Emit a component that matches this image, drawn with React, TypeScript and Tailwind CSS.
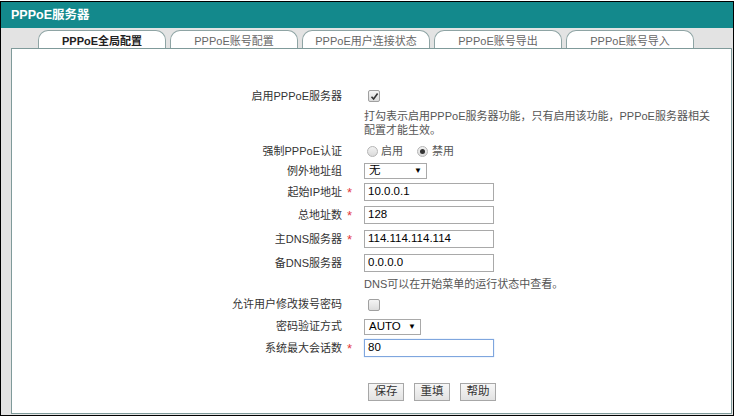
import type { ReactNode } from "react"

const tabs = ["PPPoE全局配置", "PPPoE账号配置", "PPPoE用户连接状态", "PPPoE账号导出", "PPPoE账号导入"]

const Row = ({
  label,
  required,
  h,
  children,
}: {
  label?: string
  required?: boolean
  h: string
  children?: ReactNode
}) => (
  <div className={`flex items-center ${h}`}>
    <div className="w-[330px] text-right text-[#333]">{label}</div>
    <div className="w-[22px] pl-[5px] text-[#e4393c] text-[13px] leading-none">{required ? "*" : ""}</div>
    <div className="flex items-center">{children}</div>
  </div>
)

const TextBox = ({ value, focused }: { value: string; focused?: boolean }) => (
  <div
    className={`w-[130px] h-[18px] border px-[3px] flex items-center text-[11.5px] text-black bg-white ${
      focused ? "border-[#7fa6de] shadow-[0_0_1px_#9ec0ef]" : "border-[#a9a9a9]"
    }`}
  >
    {value}
  </div>
)

const Select = ({ value, w }: { value: string; w: string }) => (
  <div className={`${w} h-[16px] border border-[#a9a9a9] bg-white flex items-center justify-between px-[4px] text-[11.5px] text-black`}>
    <span>{value}</span>
    <span className="text-[8px] leading-none">▼</span>
  </div>
)

const CheckBox = ({ checked }: { checked?: boolean }) => (
  <span className="ml-[4px] w-[12px] h-[12px] rounded-[2px] border border-[#a0a0a0] bg-gradient-to-b from-[#f4f4f4] to-[#dcdcdc] flex items-center justify-center">
    {checked && (
      <svg width="9" height="9" viewBox="0 0 9 9">
        <path d="M1.5 4.8 L3.6 7 L7.6 1.6" fill="none" stroke="#333" strokeWidth="1.6" />
      </svg>
    )}
  </span>
)

const Radio = ({ checked }: { checked?: boolean }) => (
  <span className="w-[11px] h-[11px] rounded-full border border-[#b5b5b5] bg-gradient-to-b from-[#f2f2f2] to-[#dadada] flex items-center justify-center">
    {checked && <span className="w-[5px] h-[5px] rounded-full bg-[#333]" />}
  </span>
)

const Btn = ({ children }: { children: ReactNode }) => (
  <button
    type="button"
    className="w-[36px] h-[18px] border border-[#a7a7a7] bg-gradient-to-b from-[#f7f7f7] to-[#e2e2e2] text-[11.5px] text-[#333] leading-none"
  >
    {children}
  </button>
)

export default function App() {
  return (
    <div
      className="w-[738px] h-[419px] bg-white pt-px text-[11px]"
      style={{ fontFamily: '"Liberation Sans", "Noto Sans CJK SC", sans-serif' }}
    >
      <div className="w-[734px] h-[415px] border border-black bg-[#e3e3e3] flex flex-col">
        <div className="h-[26px] bg-[#13898c] text-white font-bold text-[12.5px] pl-[10px] flex items-center">
          PPPoE服务器
        </div>
        <div className="h-[20px] flex items-end pl-[37px] gap-[4px]">
          {tabs.map((t, i) => (
            <div
              key={t}
              className={`w-[128px] h-[18px] rounded-t-[10px] border border-b-0 border-[#8ea4a4] bg-white flex items-center justify-center pt-[3px] ${
                i === 0 ? "font-bold text-[#222]" : "text-[#666]"
              }`}
            >
              {t}
            </div>
          ))}
        </div>
        <div className="flex-1 ml-[10px] mr-[1px] mb-px bg-white border border-[#7f9a9a] pt-[37px]">
          <Row label="启用PPPoE服务器" h="h-[20px]">
            <CheckBox checked />
          </Row>
          <div className="pl-[352px] pt-[3px] text-[#555] leading-[14px]">
            打勾表示启用PPPoE服务器功能，只有启用该功能，PPPoE服务器相关
            <br />
            配置才能生效。
          </div>
          <Row label="强制PPPoE认证" h="h-[20px] mt-[4px]">
            <span className="flex items-center gap-[3px] ml-[3px] text-[#555]">
              <Radio /> 启用
            </span>
            <span className="flex items-center gap-[4px] ml-[14px] text-[#555]">
              <Radio checked /> 禁用
            </span>
          </Row>
          <Row label="例外地址组" h="h-[20px]">
            <Select value="无" w="w-[63px]" />
          </Row>
          <Row label="起始IP地址" required h="h-[22px]">
            <TextBox value="10.0.0.1" />
          </Row>
          <Row label="总地址数" required h="h-[24px]">
            <TextBox value="128" />
          </Row>
          <Row label="主DNS服务器" required h="h-[24px]">
            <TextBox value="114.114.114.114" />
          </Row>
          <Row label="备DNS服务器" h="h-[24px]">
            <TextBox value="0.0.0.0" />
          </Row>
          <Row h="h-[18px]">
            <span className="text-[#555]">DNS可以在开始菜单的运行状态中查看。</span>
          </Row>
          <Row label="允许用户修改拨号密码" h="h-[23px]">
            <CheckBox />
          </Row>
          <Row label="密码验证方式" h="h-[21px]">
            <Select value="AUTO" w="w-[57px]" />
          </Row>
          <Row label="系统最大会话数" required h="h-[22px]">
            <TextBox value="80" focused />
          </Row>
          <div className="flex gap-[10px] pl-[356px] mt-[24px]">
            <Btn>保存</Btn>
            <Btn>重填</Btn>
            <Btn>帮助</Btn>
          </div>
        </div>
      </div>
    </div>
  )
}
